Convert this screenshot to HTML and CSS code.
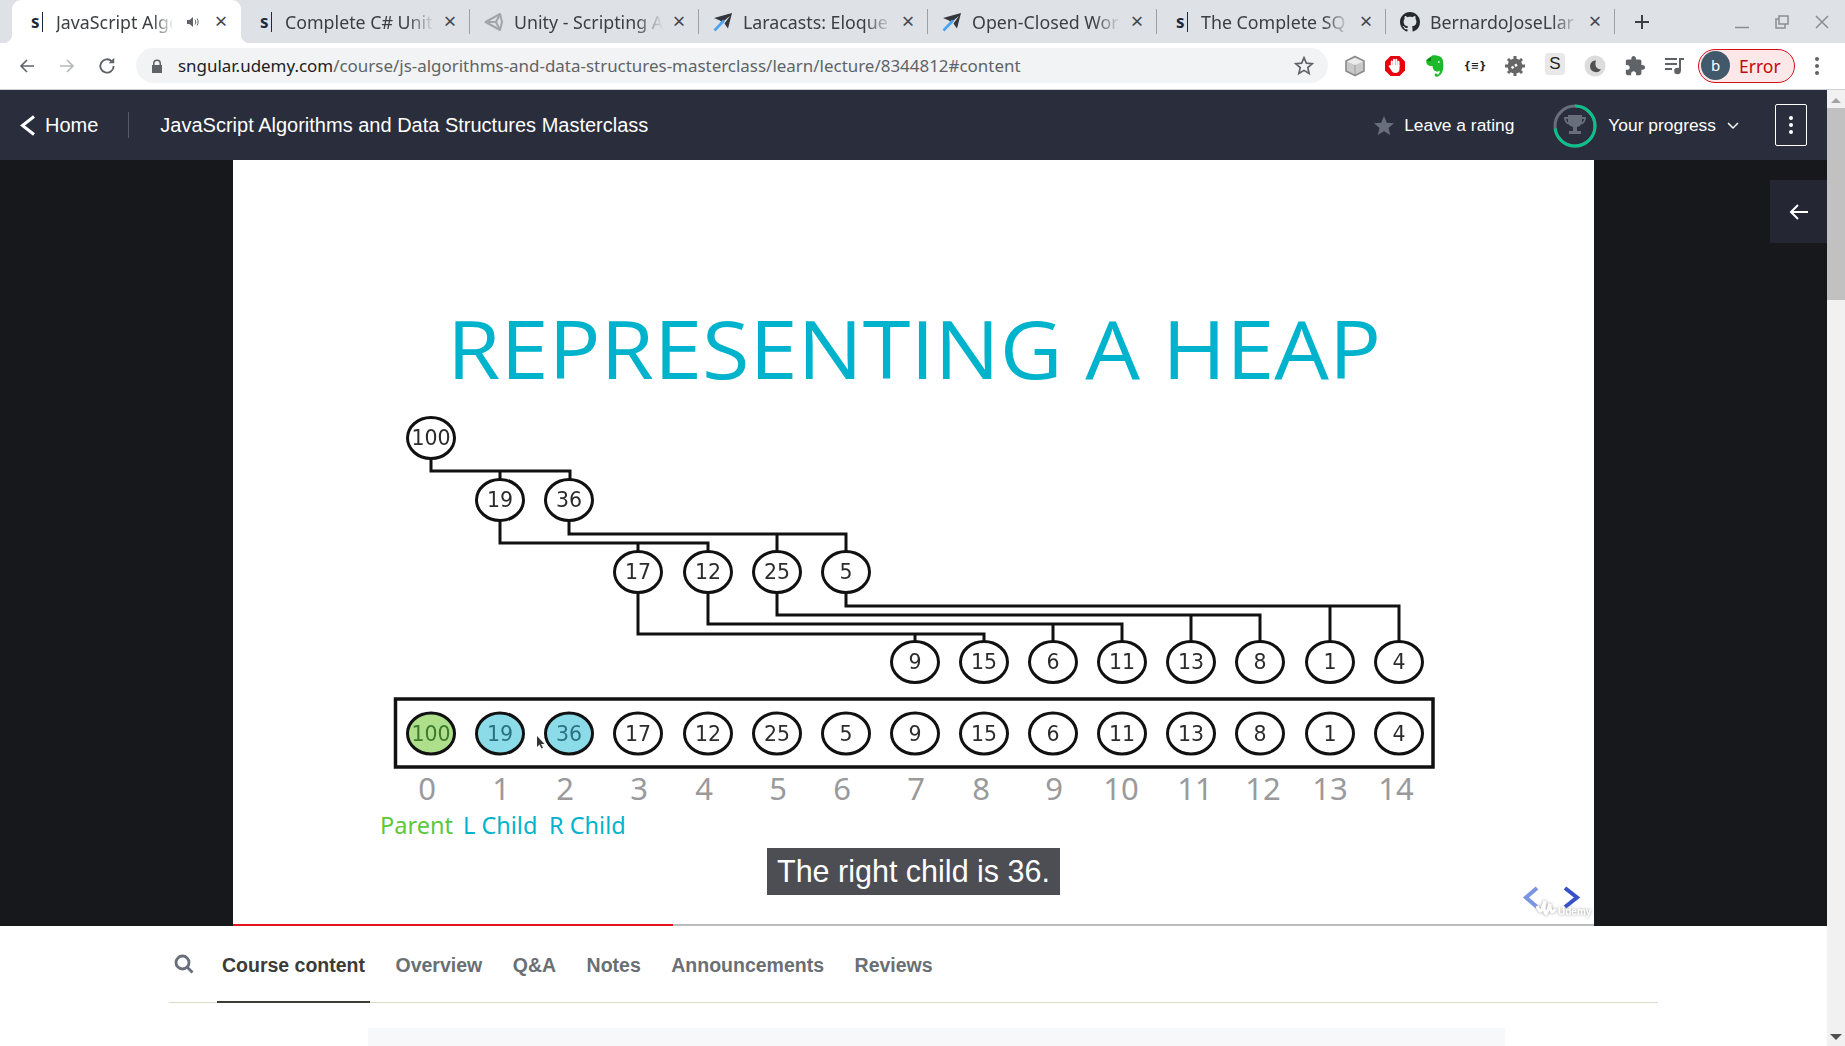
FILE: index.html
```html
<!DOCTYPE html>
<html lang="en">
<head>
  <meta charset="UTF-8">
  <title>JavaScript Algorithms and Data Structures Masterclass</title>
  <link rel="stylesheet" href="styles.css">
</head>
<body>
  <!-- browser chrome -->
  <div class="tabstrip">
    <div class="tab active">
      <span class="favicon"><span class="fav-s">s</span></span>
      <span class="tab-title short">JavaScript Algo</span>
      <svg class="speaker" width="14" height="14" viewBox="0 0 14 14"><path d="M1 5h2.500L7 2v10L3.500 9H1z" fill="#5f6368"/><path d="M9 4.500c1 1.500 1 3.500 0 5M11 3.500c1.500 2 1.500 5 0 7" fill="none" stroke="#5f6368" stroke-width="1"/></svg>
      <span class="tab-close">&times;</span>
    </div>
    <div class="tab sep">
      <span class="favicon"><span class="fav-s">s</span></span>
      <span class="tab-title">Complete C# Unit</span>
      <span class="tab-close">&times;</span>
    </div>
    <div class="tab sep">
      <span class="favicon">
        <svg width="20" height="20" viewBox="0 0 20 20" fill="none" stroke="#a3a5a8" stroke-width="2" stroke-linejoin="round"><path d="M1.500 10 16 2l2 8-2 8z"/><path d="M1.500 10H12l4-8M12 10l4 8"/></svg>
      </span>
      <span class="tab-title">Unity - Scripting A</span>
      <span class="tab-close">&times;</span>
    </div>
    <div class="tab sep">
      <span class="favicon">
        <svg width="20" height="20" viewBox="0 0 20 20"><path d="M19 1 1 6l6 2.500 2 2L17 4l-5.500 7.500 2 3 1.500 2z" fill="#33373d"/><path d="M1.500 18.500 11 8.500" stroke="#4aa3f0" stroke-width="2.600"/></svg>
      </span>
      <span class="tab-title">Laracasts: Eloque</span>
      <span class="tab-close">&times;</span>
    </div>
    <div class="tab sep">
      <span class="favicon">
        <svg width="20" height="20" viewBox="0 0 20 20"><path d="M19 1 1 6l6 2.500 2 2L17 4l-5.500 7.500 2 3 1.500 2z" fill="#33373d"/><path d="M1.500 18.500 11 8.500" stroke="#4aa3f0" stroke-width="2.600"/></svg>
      </span>
      <span class="tab-title">Open-Closed Wor</span>
      <span class="tab-close">&times;</span>
    </div>
    <div class="tab sep">
      <span class="favicon"><span class="fav-s">s</span></span>
      <span class="tab-title">The Complete SQ</span>
      <span class="tab-close">&times;</span>
    </div>
    <div class="tab sep">
      <span class="favicon">
        <svg width="20" height="20" viewBox="0 0 16 16"><path fill="#24292e" d="M8 0C3.580 0 0 3.580 0 8c0 3.540 2.290 6.530 5.470 7.590.4.070.55-.17.55-.38 0-.19-.01-.82-.01-1.490-2.010.37-2.530-.49-2.690-.94-.09-.23-.48-.94-.82-1.130-.28-.15-.68-.52-.01-.53.630-.01 1.080.58 1.230.82.720 1.210 1.870.87 2.330.66.070-.52.280-.87.510-1.070-1.780-.2-3.640-.89-3.640-3.950 0-.87.310-1.590.820-2.150-.08-.2-.36-1.020.080-2.120 0 0 .670-.21 2.200.82.640-.18 1.320-.27 2-.27.680 0 1.360.09 2 .27 1.530-1.040 2.200-.82 2.200-.82.440 1.100.160 1.920.080 2.120.510.560.820 1.270.820 2.150 0 3.070-1.870 3.750-3.650 3.950.290.250.540.730.540 1.480 0 1.070-.01 1.930-.01 2.200 0 .210.150.460.550.380A8.013 8.013 0 0 0 16 8c0-4.420-3.580-8-8-8z"/></svg>
      </span>
      <span class="tab-title">BernardoJoseLlar</span>
      <span class="tab-close">&times;</span>
    </div>
    <svg class="new-tab" width="16" height="16" viewBox="0 0 16 16"><path d="M8 1v14M1 8h14" stroke="#3c4043" stroke-width="2"/></svg>
    <div class="window-btns">
      <svg width="14" height="14" viewBox="0 0 14 14"><path d="M0 12.500h14" stroke="#8a8d91" stroke-width="1.500"/></svg>
      <svg width="14" height="14" viewBox="0 0 14 14" fill="none" stroke="#8a8d91" stroke-width="1.500"><path d="M4 1h9v8H4zM4 4H1v9h9V9"/></svg>
      <svg width="14" height="14" viewBox="0 0 14 14"><path d="M1 1l12 12M13 1 1 13" stroke="#8a8d91" stroke-width="1.500"/></svg>
    </div>
  </div>

  <div class="toolbar">
    <div class="nav-btn">
      <svg width="18" height="18" viewBox="0 0 18 18" fill="none" stroke="#5f6368" stroke-width="1.600"><path d="M16 9H3M9 3 3 9l6 6"/></svg>
    </div>
    <div class="nav-btn">
      <svg width="18" height="18" viewBox="0 0 18 18" fill="none" stroke="#b4b7bb" stroke-width="1.600"><path d="M2 9h13M9 3l6 6-6 6"/></svg>
    </div>
    <div class="nav-btn">
      <svg width="20" height="20" viewBox="0 0 18 18" fill="none" stroke="#5f6368" stroke-width="1.700"><path d="M15 9a6 6 0 1 1-1.800-4.300"/><path d="M15.500 1.500v5h-5" fill="#5f6368" stroke="none"/></svg>
    </div>
    <div class="omnibox">
      <svg class="lock" width="12" height="14" viewBox="0 0 12 14"><path d="M2 6V4.500a4 4 0 0 1 8 0V6h1v8H1V6zm1.500 0h5V4.500a2.500 2.500 0 0 0-5 0z" fill="#5f6368"/></svg>
      <span class="url"><span class="host">sngular.udemy.com</span>/course/js-algorithms-and-data-structures-masterclass/learn/lecture/8344812#content</span>
      <svg class="bookmark" width="20" height="20" viewBox="0 0 24 24" fill="none" stroke="#5f6368" stroke-width="2"><path d="M12 17.270 18.180 21l-1.640-7.030L22 9.240l-7.190-.61L12 2 9.190 8.630 2 9.240l5.460 4.730L5.820 21z"/></svg>
    </div>
    <div class="extensions">
      <div class="ext">
        <svg width="22" height="22" viewBox="0 0 22 22"><path d="M11 1.500 20 6v10l-9 4.500L2 16V6z" fill="#c9c9c9" stroke="#8b8b8b" stroke-width="1.600"/><path d="M3 6.500 11 10l8-3.500L11 3z" fill="#ececec"/><path d="M11 10v9.500" stroke="#9b9b9b"/></svg>
      </div>
      <div class="ext">
        <svg width="22" height="22" viewBox="0 0 22 22"><path d="M6.500 1h9L21 6.500v9L15.500 21h-9L1 15.500v-9z" fill="#e8000b"/><path d="M7.800 11V6.500M10 11V4.800M12.300 11V4.800M14.500 11V6.800" stroke="#fff" stroke-width="2" stroke-linecap="round"/><path d="M6.800 10h8.700v4c0 2.500-1.800 4-4.200 4-2 0-3.200-1-4-2.800L4.800 11.500c-.5-1 .8-1.800 1.500-1z" fill="#fff"/></svg>
      </div>
      <div class="ext">
        <svg width="22" height="24" viewBox="0 0 22 24"><path d="M7 2.500C8 1.200 10 1 12.500 1.500c3.500.5 6 2 6.500 5.500.4 3 .6 6 0 8.500-.6 2.700-2.300 6-5 7-2 .6-3.500-.3-3.300-1.800.2-1.300 2-1.700 2.800-.7.2.3.2.6 0 .9 1.500-.5 2.500-2.500 2.300-4.400-.8 1-2.500 1.200-4 .8-2.500-.7-3-3-3.300-5.300-2.200.3-4.500-.4-5.500-2-1-1.500-1-3-.5-4.500z" fill="#1db928"/><path d="M7 2.700V7H2.700z" fill="#0c7d16"/><circle cx="14.800" cy="8" r=".9" fill="#fff"/></svg>
      </div>
      <div class="ext ext-json">{≡}</div>
      <div class="ext">
        <svg width="22" height="22" viewBox="0 0 22 22"><circle cx="11" cy="11" r="7.500" fill="#666"/><path d="M11 1v20M1 11h20M4 4l14 14M18 4 4 18" stroke="#666" stroke-width="3"/><path d="M7.500 13 14 9" stroke="#fff" stroke-width="2.500" stroke-dasharray="2.500 1.500"/></svg>
      </div>
      <div class="ext ext-s">S</div>
      <div class="ext">
        <svg width="22" height="22" viewBox="0 0 22 22"><circle cx="11" cy="11" r="10.500" fill="#dcdcdc"/><path d="M12 5.500a5.800 5.800 0 1 0 5 8.500c-3.500 1-7-2.500-5-8.500z" fill="#505050"/></svg>
      </div>
      <div class="ext">
        <svg width="22" height="22" viewBox="0 0 24 24"><path fill="#5f6368" d="M20.500 11H19V7c0-1.100-.9-2-2-2h-4V3.500C13 2.120 11.880 1 10.500 1S8 2.120 8 3.500V5H4c-1.100 0-1.990.9-1.990 2v3.800H3.500c1.490 0 2.700 1.210 2.700 2.700s-1.210 2.700-2.700 2.700H2V20c0 1.100.9 2 2 2h3.800v-1.500c0-1.490 1.210-2.700 2.700-2.700 1.490 0 2.700 1.210 2.700 2.700V22H17c1.100 0 2-.9 2-2v-4h1.500c1.380 0 2.500-1.120 2.500-2.500S21.880 11 20.500 11z"/></svg>
      </div>
      <div class="ext">
        <svg width="22" height="20" viewBox="0 0 22 20"><path d="M1 3h12M1 8h12M1 13h7" stroke="#5f6368" stroke-width="2"/><path d="M16 15V3h4" fill="none" stroke="#5f6368" stroke-width="2"/><circle cx="13.500" cy="15" r="3.300" fill="#5f6368"/></svg>
      </div>
    </div>
    <div class="profile-pill">
      <span class="avatar">b</span>
      <span class="pill-text">Error</span>
    </div>
    <div class="chrome-menu"><i></i><i></i><i></i></div>
  </div>

  <div class="page">
    <div class="main">
      <!-- udemy header -->
      <header class="course-header">
        <svg class="home-chevron" width="15" height="21" viewBox="0 0 15 21" fill="none" stroke="#fff" stroke-width="3"><path d="M14 1.500 2.500 10.500l11.500 9"/></svg>
        <span class="home-link">Home</span>
        <span class="header-divider"></span>
        <span class="course-title">JavaScript Algorithms and Data Structures Masterclass</span>
        <span class="rating">
          <svg width="24" height="24" viewBox="0 0 24 24"><path fill="#686f7a" d="M12 17.270 18.180 21l-1.640-7.030L22 9.240l-7.190-.61L12 2 9.190 8.630 2 9.240l5.460 4.730L5.820 21z"/></svg>
          Leave a rating
        </span>
        <span class="progress">
          <svg width="44" height="44" viewBox="0 0 44 44">
            <circle cx="22" cy="22" r="20" fill="none" stroke="#686f7a" stroke-width="3"/>
            <circle cx="22" cy="22" r="20" fill="none" stroke="#0cc08a" stroke-width="3" stroke-dasharray="91 126" transform="rotate(-90 22 22)"/>
            <path d="M15 11h14v2h4c0 4-2 7-5 7.500-1 1.500-2 2-4 2.500v4h4v3H16v-3h4v-4c-2-.5-3-1-4-2.500C13 20 11 17 11 13h4zm-2 4c.3 1.600 1 2.800 2 3.400V15zm18 0h-2v3.400c1-.6 1.700-1.800 2-3.400z" fill="#686f7a" fill-rule="evenodd"/>
          </svg>
          <span class="progress-label">Your progress</span>
          <svg width="12" height="8" viewBox="0 0 12 8" fill="none" stroke="#fff" stroke-width="1.500"><path d="m1 1 5 5 5-5"/></svg>
        </span>
        <span class="kebab"><i></i><i></i><i></i></span>
      </header>

      <!-- video area, the slide is a free canvas -->
      <div class="stage">
        <div class="slide">
          <svg class="slide-art" width="1361" height="766" viewBox="233 160 1361 766">
            <text class="slide-title" x="447" y="379" textLength="934" lengthAdjust="spacingAndGlyphs">REPRESENTING A HEAP</text>
            <g class="diagram">
              <path class="wire" d="M431 458V471H570V480M500 471V480"/>
              <path class="wire" d="M500 520V543H708V552M638 543V552"/>
              <path class="wire" d="M569 520V534H846V552M777 534V552"/>
              <path class="wire" d="M846 592V606H1399V642M1330 606V642"/>
              <path class="wire" d="M777 592V615H1260V642M1191 615V642"/>
              <path class="wire" d="M708 592V624H1122V642M1053 624V642"/>
              <path class="wire" d="M638 592V634H984V642M915 634V642"/>
              <rect class="array-box" x="395.500" y="699" width="1037.500" height="68"/>

              <g class="node"><ellipse cx="431" cy="438" rx="23.500" ry="20.500"/><text x="431" y="445">100</text></g>
              <g class="node"><ellipse cx="500" cy="500" rx="23.500" ry="20.500"/><text x="500" y="507">19</text></g>
              <g class="node"><ellipse cx="569" cy="500" rx="23.500" ry="20.500"/><text x="569" y="507">36</text></g>
              <g class="node"><ellipse cx="638" cy="572" rx="23.500" ry="20.500"/><text x="638" y="579">17</text></g>
              <g class="node"><ellipse cx="708" cy="572" rx="23.500" ry="20.500"/><text x="708" y="579">12</text></g>
              <g class="node"><ellipse cx="777" cy="572" rx="23.500" ry="20.500"/><text x="777" y="579">25</text></g>
              <g class="node"><ellipse cx="846" cy="572" rx="23.500" ry="20.500"/><text x="846" y="579">5</text></g>

              <g class="node"><ellipse cx="915" cy="662" rx="23.500" ry="20.500"/><text x="915" y="669">9</text></g>
              <g class="node"><ellipse cx="984" cy="662" rx="23.500" ry="20.500"/><text x="984" y="669">15</text></g>
              <g class="node"><ellipse cx="1053" cy="662" rx="23.500" ry="20.500"/><text x="1053" y="669">6</text></g>
              <g class="node"><ellipse cx="1122" cy="662" rx="23.500" ry="20.500"/><text x="1122" y="669">11</text></g>
              <g class="node"><ellipse cx="1191" cy="662" rx="23.500" ry="20.500"/><text x="1191" y="669">13</text></g>
              <g class="node"><ellipse cx="1260" cy="662" rx="23.500" ry="20.500"/><text x="1260" y="669">8</text></g>
              <g class="node"><ellipse cx="1330" cy="662" rx="23.500" ry="20.500"/><text x="1330" y="669">1</text></g>
              <g class="node"><ellipse cx="1399" cy="662" rx="23.500" ry="20.500"/><text x="1399" y="669">4</text></g>

              <g class="node parent"><ellipse cx="431" cy="733.500" rx="23.500" ry="20.500"/><text x="431" y="740.500">100</text></g>
              <g class="node child"><ellipse cx="500" cy="733.500" rx="23.500" ry="20.500"/><text x="500" y="740.500">19</text></g>
              <g class="node child"><ellipse cx="569" cy="733.500" rx="23.500" ry="20.500"/><text x="569" y="740.500">36</text></g>
              <g class="node"><ellipse cx="638" cy="733.500" rx="23.500" ry="20.500"/><text x="638" y="740.500">17</text></g>
              <g class="node"><ellipse cx="708" cy="733.500" rx="23.500" ry="20.500"/><text x="708" y="740.500">12</text></g>
              <g class="node"><ellipse cx="777" cy="733.500" rx="23.500" ry="20.500"/><text x="777" y="740.500">25</text></g>
              <g class="node"><ellipse cx="846" cy="733.500" rx="23.500" ry="20.500"/><text x="846" y="740.500">5</text></g>
              <g class="node"><ellipse cx="915" cy="733.500" rx="23.500" ry="20.500"/><text x="915" y="740.500">9</text></g>
              <g class="node"><ellipse cx="984" cy="733.500" rx="23.500" ry="20.500"/><text x="984" y="740.500">15</text></g>
              <g class="node"><ellipse cx="1053" cy="733.500" rx="23.500" ry="20.500"/><text x="1053" y="740.500">6</text></g>
              <g class="node"><ellipse cx="1122" cy="733.500" rx="23.500" ry="20.500"/><text x="1122" y="740.500">11</text></g>
              <g class="node"><ellipse cx="1191" cy="733.500" rx="23.500" ry="20.500"/><text x="1191" y="740.500">13</text></g>
              <g class="node"><ellipse cx="1260" cy="733.500" rx="23.500" ry="20.500"/><text x="1260" y="740.500">8</text></g>
              <g class="node"><ellipse cx="1330" cy="733.500" rx="23.500" ry="20.500"/><text x="1330" y="740.500">1</text></g>
              <g class="node"><ellipse cx="1399" cy="733.500" rx="23.500" ry="20.500"/><text x="1399" y="740.500">4</text></g>
            </g>

            <g class="indices">
              <text x="427" y="800">0</text>
              <text x="501" y="800">1</text>
              <text x="565" y="800">2</text>
              <text x="639" y="800">3</text>
              <text x="704" y="800">4</text>
              <text x="778" y="800">5</text>
              <text x="842" y="800">6</text>
              <text x="916" y="800">7</text>
              <text x="981" y="800">8</text>
              <text x="1054" y="800">9</text>
              <text x="1121" y="800">10</text>
              <text x="1195" y="800">11</text>
              <text x="1263" y="800">12</text>
              <text x="1330" y="800">13</text>
              <text x="1396" y="800">14</text>
            </g>

            <text class="legend legend-parent" x="380" y="834">Parent</text>
            <text class="legend legend-child" x="463" y="834">L Child</text>
            <text class="legend legend-child" x="549" y="834">R Child</text>

            <path class="pointer" d="M537 736v11l2.500-2.500 2 4 1.500-.8-2-3.700h3.500z"/>

            <path class="slide-prev" d="M1537 888 1526 897.500 1537 907"/>
            <path class="slide-next" d="M1565 888 1577 897.500 1565 907"/>
            <g class="watermark">
              <path d="M1537 906c2 5 4 7 5 3 1-3 2-6 3-8-1 5-1 11 1 13 2-3 3-8 4-10 0 3 0 6 2 8 1 0 2-1 3-3" />
              <text x="1558" y="915">Udemy</text>
            </g>
          </svg>
          <div class="caption">The right child is 36.</div>
          <div class="scrubber"><div class="scrubber-fill"></div></div>
        </div>
        <div class="collapse-btn">
          <svg width="20" height="16" viewBox="0 0 20 16" fill="none" stroke="#fff" stroke-width="2"><path d="M19 8H2M9 1 2 8l7 7"/></svg>
        </div>
      </div>

      <!-- lecture tabs -->
      <nav class="lecture-nav">
        <span class="nav-search">
          <svg width="20" height="20" viewBox="0 0 20 20" fill="none" stroke="#686f7a" stroke-width="2.800"><circle cx="8.500" cy="8.500" r="6.500"/><path d="m13 13 5.500 5.500"/></svg>
        </span>
        <a class="nav-item selected">Course content</a>
        <a class="nav-item">Overview</a>
        <a class="nav-item">Q&amp;A</a>
        <a class="nav-item">Notes</a>
        <a class="nav-item">Announcements</a>
        <a class="nav-item">Reviews</a>
      </nav>
      <div class="content-box"></div>
    </div>

    <div class="scrollbar">
      <span class="arrow-up"></span>
      <span class="thumb"></span>
      <span class="arrow-down"></span>
    </div>
  </div>
</body>
</html>
```

FILE: styles.css
```css
* {
  box-sizing: border-box;
}
html, body {
  margin: 0;
  height: 100%;
  overflow: hidden;
}
body {
  font-family: "Liberation Sans", Arial, sans-serif;
  display: flex;
  flex-direction: column;
  background: #fff;
}

/* tab strip */
.tabstrip {
  height: 43px;
  flex: none;
  display: flex;
  align-items: stretch;
  padding-left: 12px;
  background: #dee1e6;
}
.tab {
  width: 229px;
  flex: none;
  display: flex;
  align-items: center;
  padding-left: 14px;
  position: relative;
  font-family: "Noto Sans", sans-serif;
  font-size: 17.800px;
  color: #3c4043;
}
.tab.active {
  background: #fff;
  border-radius: 9px 9px 0 0;
}
.tab.active::before,
.tab.active::after {
  content: "";
  position: absolute;
  bottom: 0;
  width: 9px;
  height: 9px;
}
.tab.active::before {
  left: -9px;
  background: radial-gradient(circle at 0 0, transparent 9px, #fff 9.500px);
}
.tab.active::after {
  right: -9px;
  background: radial-gradient(circle at 100% 0, transparent 9px, #fff 9.500px);
}
.tab.sep::after {
  content: "";
  position: absolute;
  right: 0;
  top: 9px;
  height: 25px;
  width: 1px;
  background: #9aa0a6;
}
.favicon {
  width: 20px;
  height: 20px;
  flex: none;
  margin-right: 10px;
  display: flex;
  align-items: center;
}
.fav-s {
  margin-left: 5px;
  padding-right: 2px;
  font-family: "Noto Sans", sans-serif;
  font-size: 17px;
  font-weight: 700;
  line-height: 20px;
  color: #1c2a3f;
  border-right: 1px solid #1c2a3f;
}
.tab-title {
  width: 149px;
  flex: none;
  white-space: nowrap;
  overflow: hidden;
  -webkit-mask-image: linear-gradient(to right, #000 82%, transparent 100%);
  mask-image: linear-gradient(to right, #000 82%, transparent 100%);
}
.tab-title.short {
  width: 118px;
}
.speaker {
  margin-left: 12px;
  flex: none;
}
.tab-close {
  position: absolute;
  left: 200px;
  top: 0;
  width: 18px;
  text-align: center;
  font-size: 22px;
  line-height: 41px;
  color: #45484d;
}
.new-tab {
  align-self: center;
  margin-left: 19px;
  flex: none;
}
.window-btns {
  margin-left: auto;
  width: 120px;
  padding-right: 16px;
  display: flex;
  align-items: center;
  justify-content: space-between;
  padding-left: 10px;
}

/* toolbar */
.toolbar {
  height: 47px;
  flex: none;
  display: flex;
  align-items: center;
  padding: 0 0 1px 7px;
  background: #fff;
  border-bottom: 1px solid #cfd1d4;
}
.nav-btn {
  width: 40px;
  display: flex;
  justify-content: center;
}
.omnibox {
  width: 1192px;
  height: 35px;
  margin-left: 9px;
  padding: 0 14px 0 15px;
  display: flex;
  align-items: center;
  border-radius: 18px;
  background: #f1f3f4;
}
.url {
  margin-left: 15px;
  font-family: "Noto Sans", sans-serif;
  font-size: 16.950px;
  color: #5f6368;
  white-space: nowrap;
}
.host {
  color: #202124;
}
.bookmark {
  margin-left: auto;
}
.extensions {
  margin-left: 7px;
  display: flex;
}
.ext {
  width: 40px;
  height: 26px;
  display: flex;
  align-items: center;
  justify-content: center;
}
.ext-json {
  font-family: "DejaVu Sans", sans-serif;
  font-size: 10px;
  font-weight: 700;
  color: #222;
}
.ext-s {
  font-family: "Liberation Sans", sans-serif;
  font-size: 17px;
  color: #222;
  background: #e8e8e8;
  width: 20px;
  height: 22px;
  margin: 0 10px;
  border-radius: 4px;
}
.profile-pill {
  width: 97px;
  height: 34px;
  margin-left: 3px;
  padding-left: 2px;
  display: flex;
  align-items: center;
  border: 1px solid #d50f1c;
  border-radius: 17px;
  background: #fce8e8;
}
.avatar {
  width: 29px;
  height: 29px;
  border-radius: 50%;
  background: #41596b;
  color: #fff;
  font-family: "Noto Sans", sans-serif;
  font-size: 15px;
  line-height: 29px;
  text-align: center;
}
.pill-text {
  margin-left: 9px;
  font-family: "Noto Sans", sans-serif;
  font-size: 17.500px;
  color: #c5070f;
}
.chrome-menu {
  margin-left: 20px;
  display: flex;
  flex-direction: column;
  gap: 3px;
}
.chrome-menu i {
  width: 4px;
  height: 4px;
  border-radius: 50%;
  background: #5f6368;
}

/* page */
.page {
  flex: 1;
  min-height: 0;
  display: flex;
}
.main {
  flex: 1;
  min-width: 0;
}
.course-header {
  height: 70px;
  display: flex;
  align-items: center;
  padding-left: 20px;
  padding-right: 20px;
  background: #2a2d3b;
  color: #fff;
  font-size: 20px;
}
.home-link {
  margin-left: 10px;
}
.header-divider {
  width: 1px;
  height: 26px;
  margin: 0 31px 0 30px;
  background: #565a67;
}
.rating {
  margin-left: auto;
  padding-top: 1px;
  display: flex;
  align-items: center;
  gap: 8px;
  font-size: 17.400px;
}
.progress {
  margin-left: 39px;
  padding-top: 1px;
  display: flex;
  align-items: center;
  font-size: 17.400px;
}
.progress-label {
  margin: 0 11px;
}
.kebab {
  width: 32px;
  height: 42px;
  margin-left: 36px;
  display: flex;
  flex-direction: column;
  align-items: center;
  justify-content: center;
  gap: 3px;
  border: 1px solid #fff;
  border-radius: 2px;
}
.kebab i {
  width: 4px;
  height: 4px;
  border-radius: 50%;
  background: #fff;
}

/* video */
.stage {
  height: 766px;
  position: relative;
  display: flex;
  justify-content: center;
  background: #17181c;
}
.slide {
  width: 1361px;
  height: 766px;
  position: relative;
  background: #fff;
}
.slide-art {
  display: block;
}
.slide-title {
  font-family: "Open Sans", sans-serif;
  font-size: 80px;
  fill: #00b3cc;
}
.diagram {
  filter: blur(0.400px);
}
.wire, .array-box {
  fill: none;
  stroke: #111;
  stroke-width: 3;
}
.array-box {
  stroke-width: 3.500;
}
.node ellipse {
  fill: #fff;
  stroke: #111;
  stroke-width: 3;
}
.node text {
  font-family: "DejaVu Sans", sans-serif;
  font-size: 20.500px;
  text-anchor: middle;
  fill: #2c2c2c;
}
.node.parent ellipse {
  fill: #aee08c;
}
.node.parent text {
  fill: #3f7a2c;
}
.node.child ellipse {
  fill: #8bdbe9;
}
.node.child text {
  fill: #2a7283;
}
.indices text {
  font-family: "Noto Sans", sans-serif;
  font-size: 31px;
  text-anchor: middle;
  fill: #9a9a9c;
}
.legend {
  font-family: "Noto Sans", sans-serif;
  font-size: 23.500px;
}
.legend-parent {
  fill: #5cc83a;
}
.legend-child {
  fill: #00b3cc;
}
.pointer {
  fill: #333;
}
.slide-prev, .slide-next {
  fill: none;
  stroke-width: 4;
}
.slide-prev {
  stroke: #7c95e2;
}
.slide-next {
  stroke: #3850c8;
}
.watermark {
  filter: drop-shadow(0 0 1.500px #999);
}
.watermark path {
  fill: none;
  stroke: #fff;
  stroke-width: 3;
}
.watermark text {
  font-family: "Liberation Sans", sans-serif;
  font-size: 10px;
  font-weight: 700;
  fill: #fff;
}
.caption {
  position: absolute;
  left: 534px;
  top: 688px;
  width: 293px;
  height: 47px;
  background: #4d4e53;
  color: #fff;
  font-size: 30.500px;
  line-height: 47px;
  text-align: center;
}
.scrubber {
  position: absolute;
  left: 0;
  right: 0;
  bottom: 0;
  height: 2px;
  background: #bdbdbd;
}
.scrubber-fill {
  width: 440px;
  height: 2px;
  background: #e2141f;
}
.collapse-btn {
  position: absolute;
  right: 0;
  top: 20px;
  width: 57px;
  height: 63px;
  display: flex;
  align-items: center;
  justify-content: center;
  background: #242733;
}

/* lecture tabs */
.lecture-nav {
  width: 1489px;
  height: 77px;
  margin-left: 169px;
  display: flex;
  align-items: stretch;
  border-bottom: 1px solid #dcdacb;
}
.nav-search {
  width: 48px;
  padding-left: 5px;
  display: flex;
  align-items: center;
}
.nav-item {
  margin-right: 20.500px;
  padding: 0 5px;
  font-size: 19.500px;
  font-weight: 700;
  line-height: 79px;
  color: #6a6f73;
}
.nav-item.selected {
  height: 77px;
  color: #3c3b37;
  border-bottom: 2px solid #3c3b37;
}
.content-box {
  width: 1137px;
  height: 18px;
  margin: 25px 0 0 368px;
  background: #f7f8fa;
}

/* scrollbar */
.scrollbar {
  width: 18px;
  flex: none;
  display: flex;
  flex-direction: column;
  align-items: center;
  background: #f1f1f1;
}
.arrow-up {
  height: 5px;
  margin: 8px 0 5px;
  border: 5px solid transparent;
  border-top-width: 0;
  border-bottom: 5px solid #a3a3a3;
}
.thumb {
  width: 100%;
  height: 192px;
  flex: none;
  background: #c1c1c1;
}
.arrow-down {
  margin-top: auto;
  margin-bottom: 6px;
  border: 6px solid transparent;
  border-bottom-width: 0;
  border-top: 6px solid #505050;
}
```
